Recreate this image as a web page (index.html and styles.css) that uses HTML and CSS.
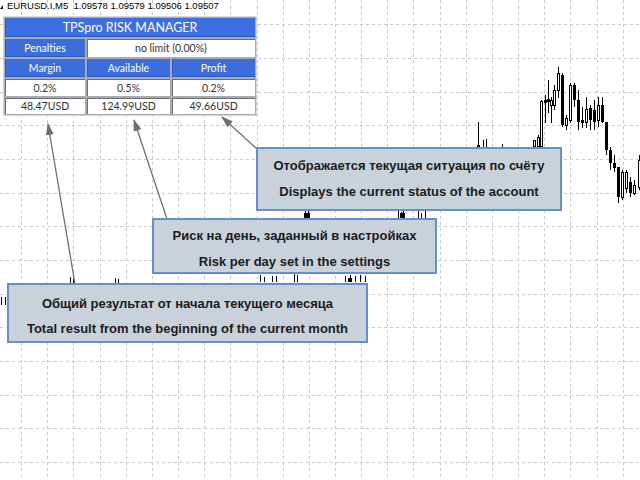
FILE: index.html
```html
<!DOCTYPE html>
<html>
<head>
<meta charset="utf-8">
<link rel="stylesheet" href="styles.css">
</head>
<body>
<div class="stage">
  <svg class="chart" width="640" height="480" viewBox="0 0 640 480">
    <path class="grid" d="M21.5 0V480M47.5 0V480M73.5 0V480M100.5 0V480M126.5 0V480M152.5 0V480M178.5 0V480M204.5 0V480M230.5 0V480M257.5 0V480M283.5 0V480M309.5 0V480M335.5 0V480M361.5 0V480M387.5 0V480M413.5 0V480M440.5 0V480M466.5 0V480M492.5 0V480M518.5 0V480M544.5 0V480M570.5 0V480M597.5 0V480M623.5 0V480
    M0 24.5H640M0 58.5H640M0 92.5H640M0 125.5H640M0 159.5H640M0 193.5H640M0 226.5H640M0 260.5H640M0 294.5H640M0 327.5H640M0 361.5H640M0 395.5H640M0 428.5H640M0 462.5H640"/>
    <g class="wick">
      <path d="M478.5 122V147M483.5 140V147M486.5 139V147M502.5 144V147M534.5 140V147M538.5 135V147M541.5 100V147M545.5 95V123M548.5 80V113M551.5 97V123M554.5 85V110M558.5 67V98M562.5 73V127M566.5 115V130M570.5 83V123M574.5 83V107M578.5 90V130M582.5 107V128M586.5 97V128M590.5 105V130M594.5 100V130M598.5 97V127M602.5 97V123M606.5 122V155M610.5 147V170M614.5 155V172M618.5 167V203M622.5 170V200M626.5 170V193M630.5 177V197M634.5 180V195M639.5 155V190"/>
      <path d="M305.5 211V218M308.5 211V218M398.5 211V218M401.5 212V218M403.5 211V218M418.5 211V218M421.5 213V218M425.5 211V218M260.5 275V282M264.5 277V282M272.5 276V282M276.5 276V282M294.5 274V282M297.5 275V282M345.5 276V282M350.5 275V282M355.5 276V282M360.5 275V282M365.5 276V282M70.5 277V283M73.5 279V283M115.5 278V283M118.5 279V283M1.5 297V305M5.5 297V305"/>
    </g>
    <g class="body-b">
      <rect x="477" y="145" width="3" height="2"/>
      <rect x="544" y="100" width="3" height="3"/>
      <rect x="547" y="99" width="3" height="3"/>
      <rect x="561" y="75" width="3" height="50"/>
      <rect x="573" y="85" width="3" height="15"/>
      <rect x="577" y="100" width="3" height="22"/>
      <rect x="581" y="120" width="3" height="3"/>
      <rect x="589" y="108" width="3" height="12"/>
      <rect x="593" y="110" width="3" height="12"/>
      <rect x="601" y="105" width="3" height="17"/>
      <rect x="605" y="122" width="3" height="28"/>
      <rect x="609" y="150" width="3" height="13"/>
      <rect x="613" y="163" width="3" height="5"/>
      <rect x="617" y="167" width="3" height="30"/>
      <rect x="629" y="182" width="3" height="11"/>
      <rect x="304" y="213" width="6" height="5"/>
      <rect x="400" y="213" width="5" height="5"/>
      <rect x="348" y="278" width="4" height="4"/>
    </g>
    <g class="body-h">
      <rect x="533.5" y="140.5" width="2" height="6"/>
      <rect x="537.5" y="137.5" width="2" height="9"/>
      <rect x="540.5" y="101.5" width="2" height="45"/>
      <rect x="550.5" y="100.5" width="2" height="5"/>
      <rect x="553.5" y="90.5" width="2" height="15"/>
      <rect x="557.5" y="73.5" width="2" height="17"/>
      <rect x="565.5" y="118.5" width="2" height="7"/>
      <rect x="569.5" y="85.5" width="2" height="35"/>
      <rect x="585.5" y="109.5" width="2" height="13"/>
      <rect x="597.5" y="105.5" width="2" height="15"/>
      <rect x="621.5" y="172.5" width="2" height="25"/>
      <rect x="625.5" y="172.5" width="2" height="16"/>
      <rect x="633.5" y="185.5" width="2" height="8"/>
      <rect x="638.5" y="160.5" width="2" height="27"/>
    </g>
  </svg>

  <div class="symbol">
    <span class="corner"></span>
    <span class="symbol-text">EURUSD.I,M5&nbsp; 1.09578 1.09579 1.09506 1.09507</span>
  </div>

  <div class="panel">
    <div class="cell blue title span3">TPSpro RISK MANAGER</div>
    <div class="cell blue">Penalties</div>
    <div class="cell white span2">no limit (0.00%)</div>
    <div class="cell blue">Margin</div>
    <div class="cell blue">Available</div>
    <div class="cell blue">Profit</div>
    <div class="cell white">0.2%</div>
    <div class="cell white">0.5%</div>
    <div class="cell white">0.2%</div>
    <div class="cell white">48.47USD</div>
    <div class="cell white">124.99USD</div>
    <div class="cell white">49.66USD</div>
  </div>

  <svg class="arrows" width="640" height="480" viewBox="0 0 640 480">
    <defs>
      <marker id="head" markerUnits="userSpaceOnUse" markerWidth="12" markerHeight="8" refX="11" refY="4" orient="auto">
        <path d="M0 0L12 4L0 8Z" fill="#6f6f6f"/>
      </marker>
    </defs>
    <line x1="258" y1="150" x2="222" y2="117" class="arrow" marker-end="url(#head)"/>
    <line x1="167" y1="219" x2="134" y2="120" class="arrow" marker-end="url(#head)"/>
    <line x1="75" y1="284" x2="48" y2="124" class="arrow" marker-end="url(#head)"/>
  </svg>

  <div class="note note-status">
    <p>Отображается текущая ситуация по счёту</p>
    <p>Displays the current status of the account</p>
  </div>
  <div class="note note-risk">
    <p>Риск на день, заданный в настройках</p>
    <p>Risk per day set in the settings</p>
  </div>
  <div class="note note-total">
    <p>Общий результат от начала текущего месяца</p>
    <p>Total result from the beginning of the current month</p>
  </div>
</div>
</body>
</html>
```

FILE: styles.css
```css
html, body {
  margin: 0;
  padding: 0;
  background: #ffffff;
}

.stage {
  position: relative;
  width: 640px;
  height: 480px;
  overflow: hidden;
  background: #ffffff;
  font-family: "Liberation Sans", Arial, sans-serif;
}

.chart, .arrows {
  position: absolute;
  left: 0;
  top: 0;
  display: block;
}

.arrows {
  pointer-events: none;
}

.grid {
  fill: none;
  stroke: #c9c9c9;
  stroke-width: 1;
  stroke-dasharray: 3 3;
  shape-rendering: crispEdges;
}

.wick path {
  fill: none;
  stroke: #000000;
  stroke-width: 1;
  shape-rendering: crispEdges;
}

.body-b rect {
  fill: #000000;
  shape-rendering: crispEdges;
}

.body-h rect {
  fill: #ffffff;
  stroke: #000000;
  stroke-width: 1;
  shape-rendering: crispEdges;
}

.arrow {
  stroke: #6f6f6f;
  stroke-width: 1.3;
}

.symbol {
  position: absolute;
  left: 0;
  top: 0;
  display: flex;
  align-items: center;
  gap: 4px;
  height: 12px;
  line-height: 12px;
}

.corner {
  width: 0;
  height: 0;
  border-left: 3px solid transparent;
  border-bottom: 4px solid #000000;
  margin-top: 1px;
}

.symbol-text {
  font-family: "Liberation Sans", Arial, sans-serif;
  font-size: 9.5px;
  color: #000000;
  white-space: nowrap;
}

.panel {
  position: absolute;
  left: 4px;
  top: 17px;
  padding: 1px;
  display: grid;
  grid-template-columns: 80px 83px 83px;
  grid-template-rows: 19px 18px 18px 17px 16px;
  gap: 2px;
  background: #a6abb4;
  outline: 1px solid #d8d8d8;
  font-family: Lato, "Open Sans", sans-serif;
  font-size: 10.5px;
}

.cell {
  display: flex;
  align-items: center;
  justify-content: center;
  white-space: nowrap;
}

.span2 { grid-column: span 2; }
.span3 { grid-column: span 3; }

.blue {
  background: #3b6ddc;
  color: #ffffff;
  box-shadow: inset 1px 0 0 #2c59c2, inset 0 -1px 0 #2c59c2;
}

.title {
  font-size: 12.5px;
  background: #3d6fe0;
}

.white {
  background: #ffffff;
  color: #333333;
  box-shadow: inset 1px 1px 0 #6e6e6e;
}

.note {
  position: absolute;
  box-sizing: border-box;
  background: #c9d1da;
  border: 2px solid #6592c2;
  color: #1c1c1c;
  font-family: "Liberation Sans", Arial, sans-serif;
  font-weight: bold;
  font-size: 13px;
  text-align: center;
}

.note p {
  margin: 0;
  white-space: nowrap;
}

.note-status {
  left: 256px;
  top: 147px;
  width: 306px;
  height: 64px;
  padding-top: 4px;
  line-height: 26px;
}

.note-risk {
  left: 152px;
  top: 218px;
  width: 285px;
  height: 56px;
  padding-top: 3px;
  line-height: 26px;
}

.note-total {
  left: 7px;
  top: 283px;
  width: 361px;
  height: 60px;
  padding-top: 6px;
  line-height: 25px;
}
```
